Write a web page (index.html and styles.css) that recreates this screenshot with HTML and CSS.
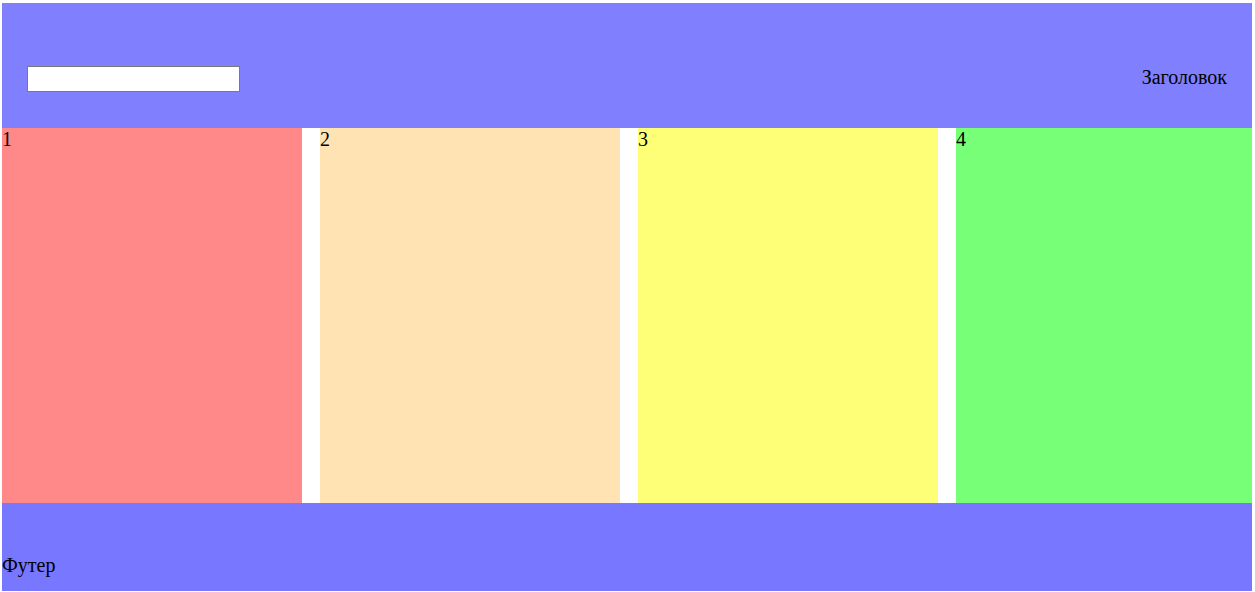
FILE: index.html
```html
<!DOCTYPE html>
<html lang="ru">
<head>
<meta charset="utf-8">
<title>Layout</title>
<link rel="stylesheet" href="styles.css">
</head>
<body>
<header class="header">
  <input class="search" type="text">
  <div class="title">Заголовок</div>
</header>
<main class="columns">
  <div class="col col-1">1</div>
  <div class="col col-2">2</div>
  <div class="col col-3">3</div>
  <div class="col col-4">4</div>
</main>
<footer class="footer">Футер</footer>
</body>
</html>
```
FILE: styles.css
```css
html, body {
  background: #ffffff;
}
body {
  margin: 3px 3px 1px 2px;
  font-family: "Liberation Serif", "Times New Roman", serif;
  font-size: 20px;
  color: #000;
}
.header {
  box-sizing: border-box;
  height: 125px;
  padding: 63px 25px 0 25px;
  background: #8080ff;
  display: flex;
  justify-content: space-between;
  align-items: flex-start;
}
.search {
  box-sizing: border-box;
  width: 213px;
  height: 26px;
  margin: 0;
  border: 1px solid #7a7a7a;
  background: #fff;
  padding: 0 2px;
}
.title {
  line-height: 23px;
}
.columns {
  display: grid;
  grid-template-columns: 300px 300px 300px 1fr;
  column-gap: 18px;
  height: 375px;
}
.col {
  line-height: 23px;
}
.col-1 { background: #ff8888; }
.col-2 { background: #ffe3b3; }
.col-3 { background: #ffff77; }
.col-4 { background: #77ff77; }
.footer {
  box-sizing: border-box;
  height: 88px;
  padding-top: 51px;
  line-height: 23px;
  background: #7777ff;
}
```
